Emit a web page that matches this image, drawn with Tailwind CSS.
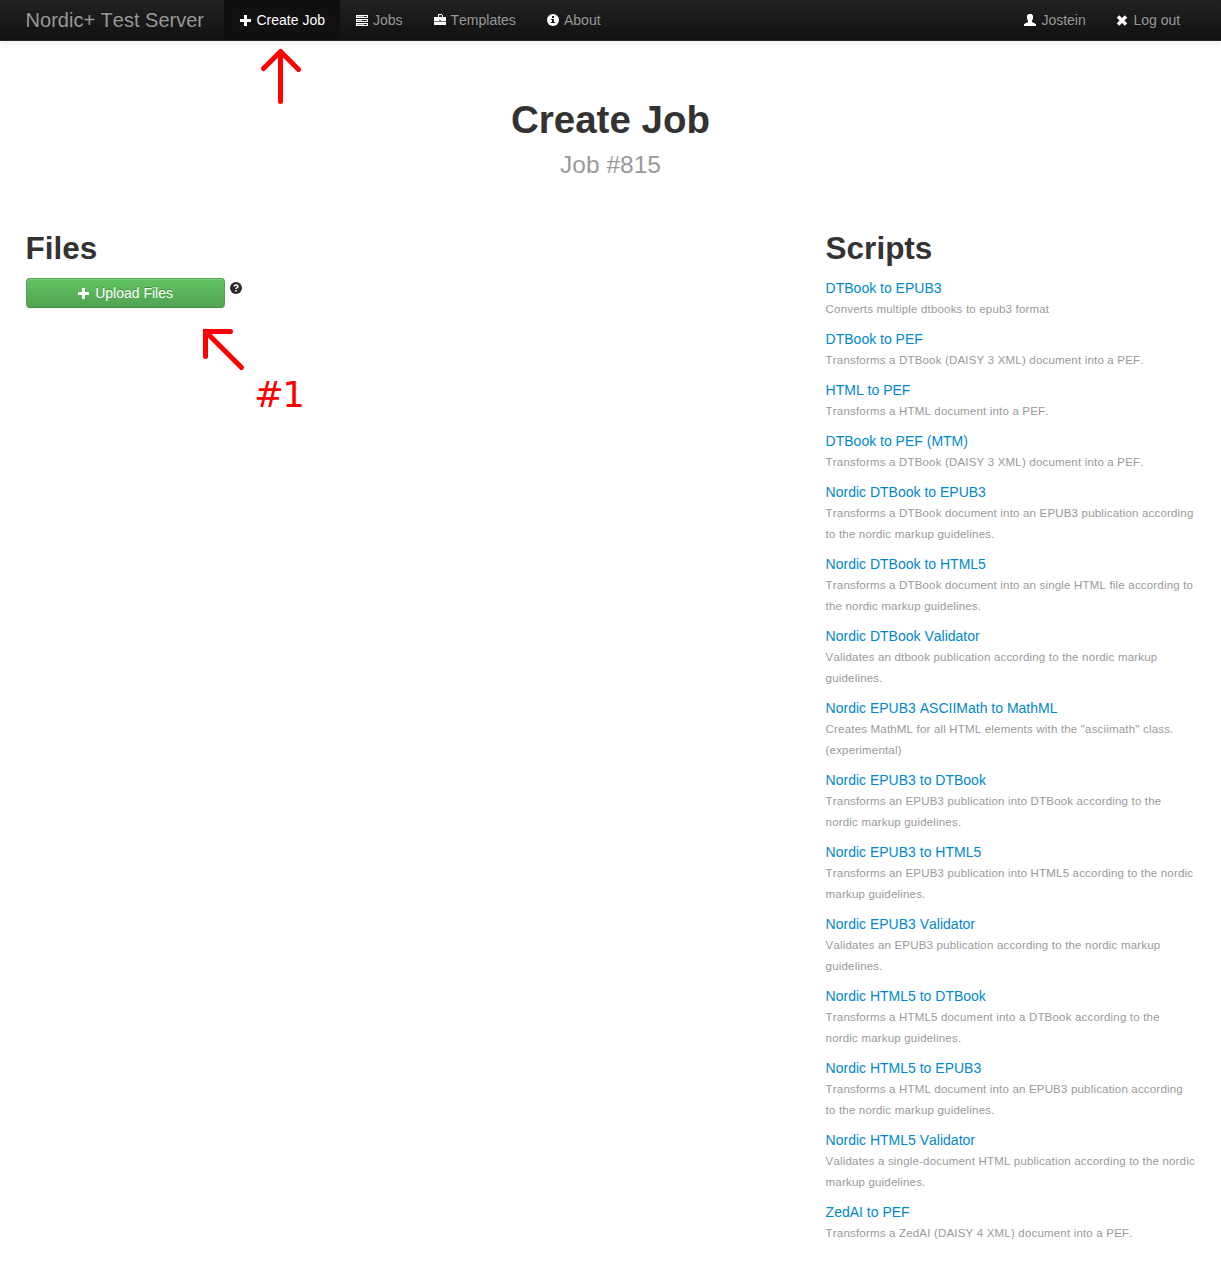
<!DOCTYPE html>
<html lang="en">
<head>
<meta charset="utf-8">
<title>Create Job</title>
<script src="https://cdn.jsdelivr.net/npm/@tailwindcss/browser@4"></script>
</head>
<body class="relative h-[1276px] overflow-hidden bg-white font-['Liberation_Sans',Arial,sans-serif] text-[14px] leading-[21px] text-[#333] [font-kerning:none]">
<nav class="flex h-[41px] border-b border-[#252525] bg-linear-to-b from-[#222] to-[#111] pr-[25.6px] pl-[25.6px] leading-5 text-[#999] shadow-[0_1px_10px_rgba(0,0,0,0.1)] [text-shadow:0_-1px_0_rgba(0,0,0,0.25)]">
  <a class="w-[198.4px] pt-[10px] text-[20px] whitespace-nowrap">Nordic+ Test Server</a>
  <a class="flex w-[116px] gap-[3.500px] bg-[#111] pt-[10px] pl-[15px] whitespace-nowrap text-white shadow-[inset_0_3px_8px_rgba(0,0,0,0.125)]"><svg class="mt-[3px] h-[14px] w-[14px] shrink-0" viewBox="0 0 14 14" fill="#fff" shape-rendering="crispEdges"><path d="M5 2h3v4h4v3H8v4H5V9H1V6h4z"/></svg>Create Job</a>
  <a class="flex w-[78px] gap-[4px] pt-[10px] pl-[15px] whitespace-nowrap"><svg class="mt-[3px] h-[14px] w-[14px] shrink-0" viewBox="0 0 14 14" shape-rendering="crispEdges"><path fill="#fff" d="M1 2h12v3H1zM1 6h12v3H1zM1 10h12v3H1z"/><path fill="#999" d="M2 3h8v1H2zM2 7h5v1H2zM2 11h7v1H2z"/><path fill="#222" d="M9 3h3v1H9zM7 7h5v1H7zM9 11h3v1H9z"/></svg>Jobs</a>
  <a class="flex w-[113px] gap-[3.500px] pt-[10px] pl-[15px] whitespace-nowrap"><svg class="mt-[3px] h-[14px] w-[14px] shrink-0" viewBox="0 0 14 14" shape-rendering="crispEdges"><path fill="#fff" d="M5 1h4v1h1v2h3v4H1V4h4zM1 9h12v3H1z"/><path fill="#222" d="M6 2h3v2H6z"/><path fill="#777" d="M1 8h12v1H1zM6 7h2v1H6z"/></svg>Templates</a>
  <a class="flex gap-[4px] pt-[10px] pl-[15px] whitespace-nowrap"><svg class="mt-[3px] h-[14px] w-[14px] shrink-0" viewBox="0 0 14 14"><circle cx="7" cy="7" r="6" fill="#fff"/><path fill="#1a1a1a" d="M6 3h2v2H6zM5 6h3v3h1v1H5V9h1V7H5z"/></svg>About</a>
  <div class="ml-auto flex">
    <a class="flex w-[92px] gap-[4px] whitespace-nowrap pt-[10px]"><svg class="mt-[3px] h-[14px] w-[14px] shrink-0" viewBox="0 0 14 14" fill="#fff"><path d="M5.500 1h3L10 2.500V5.500L9 8v1l3 1.500 1 1V13H1v-1.500l1-1L5 9V8L4 5.500V2.500z"/></svg>Jostein</a>
    <a class="flex w-[80px] gap-[4px] whitespace-nowrap pt-[10px]"><svg class="mt-[3px] h-[14px] w-[14px] shrink-0" viewBox="0 0 14 14" fill="none" stroke="#fff" stroke-width="3.400"><path d="M3 3.500l8 8M11 3.500l-8 8"/></svg>Log out</a>
  </div>
</nav>
<header class="pt-[59px] text-center font-bold">
  <h1 class="text-[38.5px] leading-[40px]">Create Job</h1>
  <p class="mt-[5px] text-[24.5px] leading-[40px] font-normal text-[#999]">Job #815</p>
</header>
<main class="flex px-[25.6px] pt-[43px]">
  <section class="w-[800px] shrink-0">
    <h2 class="text-[31.5px] leading-[40px] font-bold">Files</h2>
    <div class="mt-[10px] flex gap-[4px]">
      <button class="flex h-[30px] w-[199px] items-start justify-center gap-[4px] rounded-[4px] border border-[#51a351] border-b-[#458b45] bg-linear-to-b from-[#62c462] to-[#51a351] pt-[4px] leading-[20px] text-white shadow-[inset_0_1px_0_rgba(255,255,255,0.2),0_1px_2px_rgba(0,0,0,0.05)] [text-shadow:0_-1px_0_rgba(0,0,0,0.25)]"><svg class="mt-[3px] h-[14px] w-[14px] shrink-0" viewBox="0 0 14 14" fill="#fff" shape-rendering="crispEdges"><path d="M5 2h3v4h4v3H8v4H5V9H1V6h4z"/></svg>Upload Files</button>
      <svg class="mt-[3px] h-[14px] w-[14px]" viewBox="0 0 14 14"><circle cx="7" cy="7" r="6" fill="#2b2b2b"/><path fill="none" stroke="#fff" stroke-width="1.500" d="M5 5.500Q5.200 4 7 4T9 5.500Q9 6.300 7.800 6.800Q7 7.200 7 8"/><path fill="#fff" d="M6.200 9h1.600v1.500H6.200z"/></svg>
    </div>
  </section>
  <section class="w-[375px]">
    <h2 class="text-[31.5px] leading-[40px] font-bold">Scripts</h2>
    <ul class="mt-[10px] flex flex-col gap-[9px] whitespace-nowrap [&_a]:block [&_a]:text-[#0088cc] [&_p]:text-[11.5px] [&_p]:tracking-[0.185px] [&_p]:text-[#999]">
      <li><a>DTBook to EPUB3</a><p>Converts multiple dtbooks to epub3 format</p></li>
      <li><a>DTBook to PEF</a><p>Transforms a DTBook (DAISY 3 XML) document into a PEF.</p></li>
      <li><a>HTML to PEF</a><p>Transforms a HTML document into a PEF.</p></li>
      <li><a>DTBook to PEF (MTM)</a><p>Transforms a DTBook (DAISY 3 XML) document into a PEF.</p></li>
      <li><a>Nordic DTBook to EPUB3</a><p>Transforms a DTBook document into an EPUB3 publication according<br>to the nordic markup guidelines.</p></li>
      <li><a>Nordic DTBook to HTML5</a><p>Transforms a DTBook document into an single HTML file according to<br>the nordic markup guidelines.</p></li>
      <li><a>Nordic DTBook Validator</a><p>Validates an dtbook publication according to the nordic markup<br>guidelines.</p></li>
      <li><a>Nordic EPUB3 ASCIIMath to MathML</a><p>Creates MathML for all HTML elements with the "asciimath" class.<br>(experimental)</p></li>
      <li><a>Nordic EPUB3 to DTBook</a><p>Transforms an EPUB3 publication into DTBook according to the<br>nordic markup guidelines.</p></li>
      <li><a>Nordic EPUB3 to HTML5</a><p>Transforms an EPUB3 publication into HTML5 according to the nordic<br>markup guidelines.</p></li>
      <li><a>Nordic EPUB3 Validator</a><p>Validates an EPUB3 publication according to the nordic markup<br>guidelines.</p></li>
      <li><a>Nordic HTML5 to DTBook</a><p>Transforms a HTML5 document into a DTBook according to the<br>nordic markup guidelines.</p></li>
      <li><a>Nordic HTML5 to EPUB3</a><p>Transforms a HTML document into an EPUB3 publication according<br>to the nordic markup guidelines.</p></li>
      <li><a>Nordic HTML5 Validator</a><p>Validates a single-document HTML publication according to the nordic<br>markup guidelines.</p></li>
      <li><a>ZedAI to PEF</a><p>Transforms a ZedAI (DAISY 4 XML) document into a PEF.</p></li>
    </ul>
  </section>
</main>
<svg class="absolute top-[48px] left-[260px] h-[58px] w-[42px]" viewBox="0 0 42 58" fill="none" stroke="#f00" stroke-width="5" stroke-linecap="round" stroke-linejoin="round"><path d="M20.500 53.500V3.500M3.500 20.500l17-17 18 18"/></svg>
<svg class="absolute top-[326px] left-[200px] h-[46px] w-[46px]" viewBox="0 0 46 46" fill="none" stroke="#f00" stroke-width="5" stroke-linecap="round"><path d="M5.500 30.500V5.500h25M5.500 5.500l36 36"/></svg>
<span class="absolute top-[374px] left-[254px] font-['DejaVu_Sans',sans-serif] text-[35.5px] leading-[42px] tracking-[-1.500px] text-[#f00]">#1</span>
</body>
</html>
